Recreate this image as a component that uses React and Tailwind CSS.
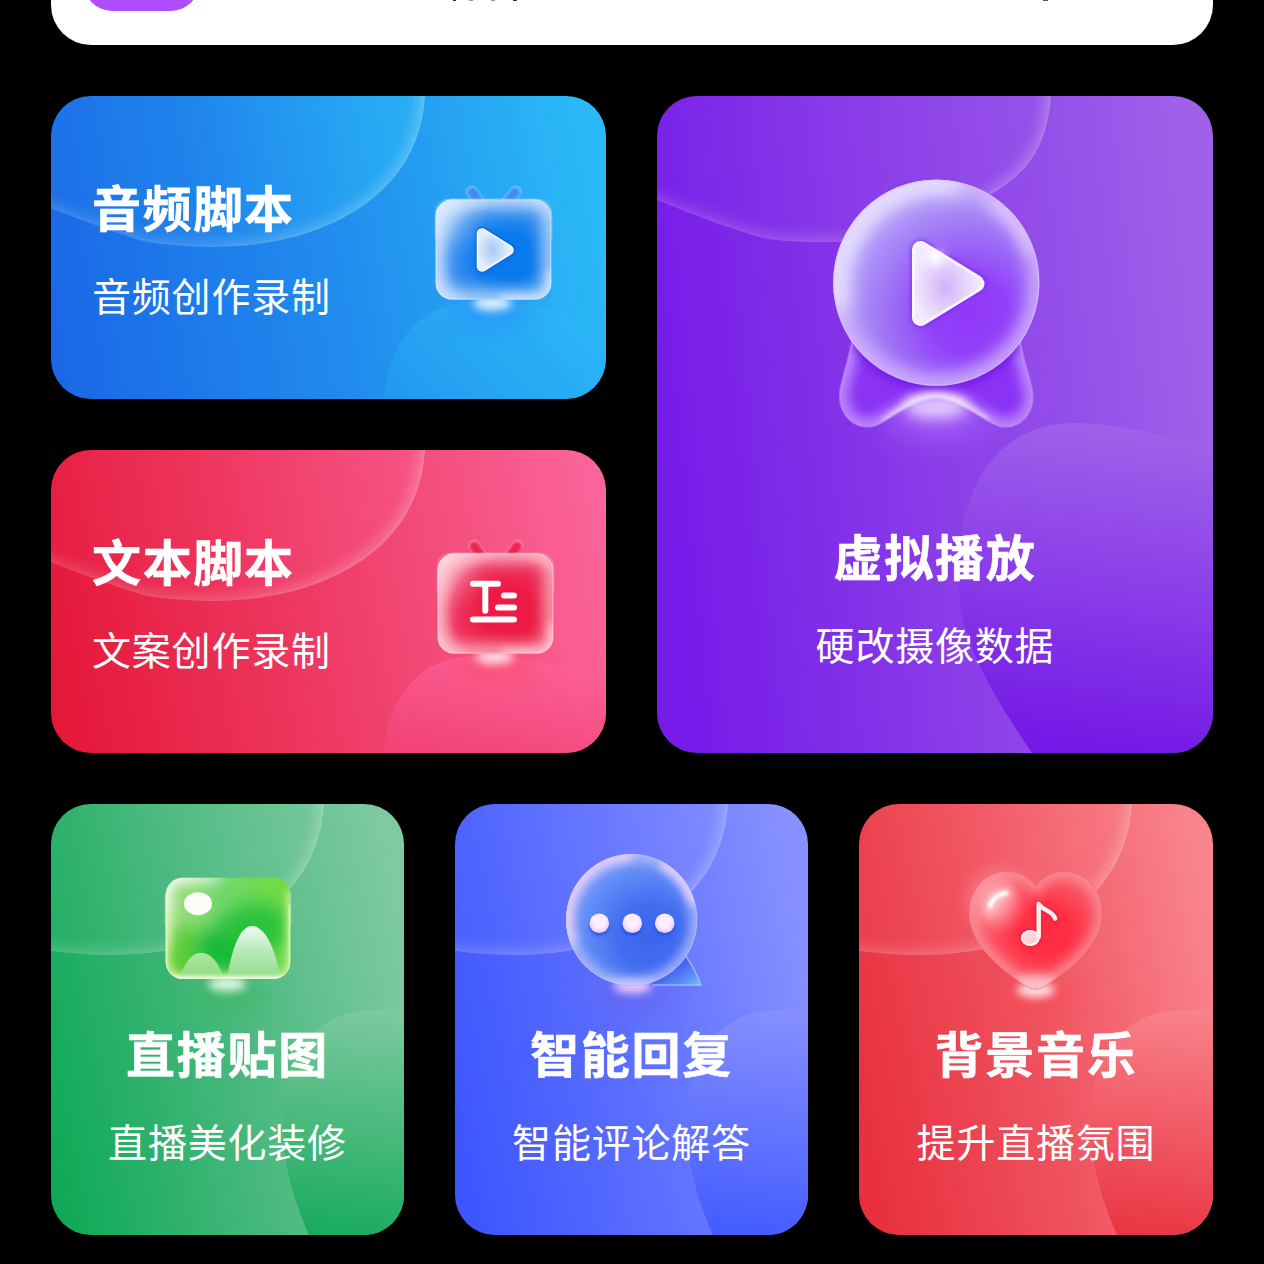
import clsx from 'clsx';

const wideBlob = 'M374 0 C370 62 334 106 270 132 C214 154 150 154 96 146 C62 136 30 124 0 112 L-110 60 V-30 H374 Z';
const wideWave = 'M258 431 C238 385 231 350 232 311 C233 255 262 207 322 206 C365 205 410 215 460 231 V431 Z';
const tallBlob = 'M394 0 C390 50 372 76 336 97 C290 130 235 146 173 146 C150 146 128 146 106 142 C70 132 35 118 0 104 L-80 70 V-30 H394 Z';
const tallWave = 'M375 657 C330 590 301 540 301 481 C301 390 340 328 417 327 C465 327 510 341 556 354 V657 Z';

/* Soft circle in the top left corner and a wave in the bottom right one */
function Backdrop({ id, from, to, tall, shift = 0, fill = 0.4, wave = 1 }) {
  const blobPath = tall ? tallBlob : wideBlob;
  const wavePath = tall ? tallWave : wideWave;
  const end = tall ? 394 : 374;
  return (
    <svg className="absolute inset-0 w-full h-full" aria-hidden="true">
      <defs>
        <linearGradient id={`${id}-blob`} gradientUnits="userSpaceOnUse" x1="0" y1="60" x2={end} y2="0">
          <stop offset="0" stopColor={to} stopOpacity="0.06" />
          <stop offset="0.4" stopColor={to} stopOpacity="0.12" />
          <stop offset="1" stopColor={to} stopOpacity={fill} />
        </linearGradient>
        <linearGradient
          id={`${id}-wave`}
          gradientUnits="userSpaceOnUse"
          x1={tall ? 480 : 360}
          y1={tall ? 340 : 212}
          x2={tall ? 430 : 325}
          y2={tall ? 660 : 455}
        >
          <stop offset="0" stopColor={to} />
          <stop offset="1" stopColor={from} />
        </linearGradient>
        <linearGradient id={`${id}-rim`} gradientUnits="userSpaceOnUse" x1="0" y1="100" x2={end} y2="0">
          <stop offset="0" stopColor="#fff" stopOpacity="0.2" />
          <stop offset="1" stopColor="#fff" stopOpacity="0.34" />
        </linearGradient>
        <clipPath id={`${id}-clip`}>
          <path d={blobPath} />
        </clipPath>
      </defs>
      <g transform={`translate(${shift - (tall ? 0 : 101)} 0)`}>
        <path d={blobPath} fill={`url(#${id}-blob)`} />
        <g clipPath={`url(#${id}-clip)`}>
          <path d={blobPath} fill="none" stroke={`url(#${id}-rim)`} strokeWidth="9" className="blur-[7px]" />
          <path d={blobPath} fill="none" stroke={`url(#${id}-rim)`} strokeWidth="3" className="blur-[1.5px]" opacity="0.4" />
        </g>
      </g>
      <path d={wavePath} fill={`url(#${id}-wave)`} opacity={wave} transform={`translate(${shift} 0)`} />
    </svg>
  );
}

/* Light spot under every icon */
function Spot({ cx, cy, color = '#fff', haze }) {
  return (
    <>
      <ellipse cx={cx} cy={cy + 10} rx="40" ry="20" fill={haze} opacity="0.6" className="blur-[11px]" />
      <ellipse cx={cx} cy={cy} rx="19" ry="7.500" fill={color} className="blur-[4px]" />
    </>
  );
}

function Screen({ id, dark, mid, light, ear, haze, children }) {
  return (
    <svg width="140" height="166" viewBox="423 176 140 166" className="shrink-0">
      <defs>
        <radialGradient id={`${id}-fill`} cx="0.62" cy="0.58" r="0.78">
          <stop offset="0" stopColor={dark} />
          <stop offset="0.3" stopColor={dark} />
          <stop offset="0.65" stopColor={mid} />
          <stop offset="1" stopColor={light} />
        </radialGradient>
        <clipPath id={`${id}-clip`}>
          <rect x="435.7" y="199.5" width="115.6" height="100" rx="16" />
        </clipPath>
      </defs>
      <g stroke={light} strokeOpacity="0.35" strokeWidth="12.5" strokeLinecap="round">
        <path d="M472 191.7 L481 204" />
        <path d="M515.5 191.7 L506 204" />
      </g>
      <g stroke={ear} strokeWidth="9.5" strokeLinecap="round" className="blur-[1.5px]">
        <path d="M472.5 192.5 L481 205" />
        <path d="M515 192.5 L506 205" />
      </g>
      <Spot cx={492.5} cy={303} color={light} haze={haze} />
      <path d="M435.2 239 V214 Q435.2 199 451 199 H536 Q551.8 199 551.8 214 V239" fill="none" stroke={light} strokeOpacity="0.4" />
      <rect x="435.7" y="199.5" width="115.6" height="100" rx="16" fill={`url(#${id}-fill)`} />
      <g clipPath={`url(#${id}-clip)`}>
        <rect x="435.7" y="199.5" width="115.6" height="100" rx="16" fill="none" stroke={light} strokeWidth="16" opacity="0.8" className="blur-[8px]" />
        <ellipse cx="444" cy="214" rx="26" ry="30" fill={light} opacity="0.4" className="blur-[12px]" />
        <path d="M500 299 H536 Q551 299 551 284 V270" fill="none" stroke={light} strokeWidth="6" className="blur-[4px]" />
      </g>
      <rect x="436.2" y="200" width="114.6" height="99" rx="15.5" fill="none" stroke={light} strokeOpacity="0.6" />
      {children}
    </svg>
  );
}

function AudioIcon() {
  return (
    <Screen id="audio" dark="#0a79ec" mid="#3f93f0" light="#e0edff" ear="#4389f2" haze="#2a94fa">
      <defs>
        <radialGradient id="audio-play" cx="0.4" cy="0.5" r="0.6">
          <stop offset="0" stopColor="#a5c9f5" />
          <stop offset="1" stopColor="#e4effd" />
        </radialGradient>
      </defs>
      <path d="M482 233 L509 250 L482 267 Z" fill="#0758d6" stroke="#0758d6" strokeWidth="12" strokeLinejoin="round" opacity="0.8" className="blur-[1.5px]" />
      <path d="M482 233.5 L508.5 250 L482 266.5 Z" fill="#fff" stroke="#fff" strokeWidth="10.5" strokeLinejoin="round" />
      <path d="M482 233.5 L508.5 250 L482 266.5 Z" fill="url(#audio-play)" stroke="url(#audio-play)" strokeWidth="7.5" strokeLinejoin="round" />
    </Screen>
  );
}

function TextIcon() {
  return (
    <Screen id="text" dark="#ed1b44" mid="#ee3560" light="#ffd6e0" ear="#e92450" haze="#fb4d6e">
      <g stroke="#fff" strokeWidth="6" strokeLinecap="round" fill="none">
        <path d="M471 229.7 H496 M483.3 229.7 V256.7" />
        <path d="M502 241.5 H512 M496 253.5 H512 M471 265.5 H512" />
      </g>
    </Screen>
  );
}

function MedalIcon() {
  const ribbon =
    'M856 320 C851 362 840 380 840 397 C841 415 853 426.500 868 426.500 C884 426.500 904 402 936 398 C968 402 989 426.500 1005 426.500 C1020 426.500 1032 415 1032.500 397 C1032 380 1021 362 1016 320 Z';
  return (
    <svg width="280" height="300" viewBox="795 170 280 300">
      <defs>
        <radialGradient id="medal-fill" cx="0.66" cy="0.66" r="0.75">
          <stop offset="0" stopColor="#9138fa" />
          <stop offset="0.25" stopColor="#9240f9" />
          <stop offset="0.55" stopColor="#9f74f6" />
          <stop offset="0.8" stopColor="#b29cf9" />
          <stop offset="1" stopColor="#dcd8fc" />
        </radialGradient>
        <radialGradient id="medal-play" cx="0.45" cy="0.55" r="0.6">
          <stop offset="0" stopColor="#d3b2f9" />
          <stop offset="1" stopColor="#f3eafe" />
        </radialGradient>
        <clipPath id="medal-clip">
          <circle cx="936.300" cy="282.700" r="103" />
        </clipPath>
        <clipPath id="ribbon-clip">
          <path d={ribbon} />
        </clipPath>
      </defs>
      <ellipse cx="936" cy="416" rx="52" ry="24" fill="#a55ff9" opacity="0.8" className="blur-[14px]" />
      <path d={ribbon} fill="#8a33f4" />
      <g clipPath="url(#ribbon-clip)">
        <path d={ribbon} fill="none" stroke="#bd88fb" strokeWidth="16" className="blur-[6px]" />
        <circle cx="936.300" cy="286" r="104" fill="#6c12e2" opacity="0.75" className="blur-[4px]" />
        <path d="M884 424 C904 408 916 400 936 399 C956 400 968 408 988 424" fill="none" stroke="#f3e6ff" strokeWidth="8" className="blur-[3px]" />
        <ellipse cx="936" cy="404" rx="28" ry="7" fill="#f3e6ff" className="blur-[5px]" />
      </g>
      <path d={ribbon} fill="none" stroke="#c795fd" strokeOpacity="0.6" strokeWidth="2.500" />
      <ellipse cx="936" cy="407" rx="32" ry="12" fill="#ead6ff" opacity="0.9" className="blur-[7px]" />
      <circle cx="936.300" cy="282.700" r="103" fill="url(#medal-fill)" />
      <g clipPath="url(#medal-clip)">
        <circle cx="936.300" cy="282.700" r="103" fill="none" stroke="#d6b6fd" strokeWidth="18" className="blur-[9px]" />
        <path d="M840 310 A103 103 0 0 1 960 184" fill="none" stroke="#e6e4fe" strokeWidth="22" className="blur-[10px]" />
        <path d="M992 202 A100 100 0 0 1 1032 252" fill="none" stroke="#e2ccfe" strokeWidth="12" opacity="0.8" className="blur-[7px]" />
      </g>
      <circle cx="936.300" cy="282.700" r="102.500" fill="none" stroke="#dcc6ff" strokeOpacity="0.55" strokeWidth="1.500" />
      <path d="M921 250 L976 283.500 L921 317 Z" fill="#7523e6" stroke="#7523e6" strokeWidth="20" strokeLinejoin="round" opacity="0.7" className="blur-[2px]" />
      <path d="M920.500 249.500 L976 283.500 L920.500 317.500 Z" fill="#fff" stroke="#fbf5ff" strokeWidth="17" strokeLinejoin="round" />
      <path d="M920.500 249.500 L976 283.500 L920.500 317.500 Z" fill="url(#medal-play)" stroke="url(#medal-play)" strokeWidth="11.500" strokeLinejoin="round" />
      <ellipse cx="936" cy="258" rx="9" ry="7" fill="#fff" className="blur-[4px]" />
    </svg>
  );
}

function PictureIcon() {
  return (
    <svg width="160" height="180" viewBox="148 850 160 180">
      <defs>
        <linearGradient id="pic-fill" x1="0" y1="0.3" x2="1" y2="0.1">
          <stop offset="0" stopColor="#a0e07c" />
          <stop offset="0.45" stopColor="#74d770" />
          <stop offset="1" stopColor="#74dc3c" />
        </linearGradient>
        <linearGradient id="pic-hill" x1="0" y1="0" x2="0" y2="1">
          <stop offset="0" stopColor="#f2fbf2" />
          <stop offset="0.5" stopColor="#b4e8b6" />
          <stop offset="1" stopColor="#94dd88" />
        </linearGradient>
        <linearGradient id="pic-hill-small" x1="0" y1="0" x2="0" y2="1">
          <stop offset="0" stopColor="#a9e6a2" />
          <stop offset="1" stopColor="#93dd80" />
        </linearGradient>
        <linearGradient id="pic-shine" gradientUnits="userSpaceOnUse" x1="166" y1="878" x2="215" y2="925">
          <stop offset="0" stopColor="#fff" />
          <stop offset="1" stopColor="#fff" stopOpacity="0" />
        </linearGradient>
        <clipPath id="pic-clip">
          <rect x="165.700" y="877.700" width="124.600" height="101.300" rx="17" />
        </clipPath>
      </defs>
      <Spot cx={227} cy={984} color="#d9f6df" haze="#3fba62" />
      <path d="M165.200 925 V893 M290.800 925 V893" stroke="#e4f8c8" strokeOpacity="0.5" />
      <g clipPath="url(#pic-clip)">
        <rect x="165" y="877" width="126" height="103" fill="url(#pic-fill)" />
        <ellipse cx="182" cy="955" rx="24" ry="30" fill="#62cf3c" className="blur-[9px]" />
        <ellipse cx="226" cy="950" rx="32" ry="24" fill="#17b938" className="blur-[10px]" />
        <ellipse cx="256" cy="928" rx="34" ry="26" fill="#24c038" opacity="0.9" className="blur-[10px]" />
        <path d="M160 955 V872 H222" fill="none" stroke="url(#pic-shine)" strokeWidth="26" className="blur-[6px]" />
        <path d="M165 910 V962 Q168 979 184 979 H274 Q291 978 291 962 V890" fill="none" stroke="#d3f2a2" strokeWidth="8" className="blur-[4px]" />
        <path d="M179 978 C186 961 192 952.700 201 952.700 C211 952.700 219 963 224 978 Z" fill="url(#pic-hill-small)" />
        <path d="M227 978 C232 948 240 926 252 926 C265 926 275 948 281 978 Z" fill="url(#pic-hill)" />
        <path d="M170 978 H287" stroke="#f1fbdc" strokeWidth="4" className="blur-[2px]" />
        <path d="M165.500 890 V962 Q166 979 183 979 H273 Q290.500 979 290.500 962 V905" fill="none" stroke="#f5fde6" strokeOpacity="0.85" strokeWidth="3" className="blur-[0.8px]" />
      </g>
      <ellipse cx="198" cy="903.700" rx="14" ry="11.500" fill="#fbfdf9" />
    </svg>
  );
}

function ChatIcon() {
  return (
    <svg width="160" height="190" viewBox="552 840 160 190">
      <defs>
        <radialGradient id="chat-fill" cx="0.64" cy="0.62" r="0.7">
          <stop offset="0" stopColor="#3c64ee" />
          <stop offset="0.35" stopColor="#426df0" />
          <stop offset="0.7" stopColor="#5f8cf6" />
          <stop offset="1" stopColor="#86a2f8" />
        </radialGradient>
        <linearGradient id="chat-tail" x1="0" y1="0" x2="1" y2="1">
          <stop offset="0.4" stopColor="#3f58ee" />
          <stop offset="0.8" stopColor="#5c96f8" />
          <stop offset="1" stopColor="#8cc0fc" />
        </linearGradient>
        <radialGradient id="chat-dot" cx="0.5" cy="0.4" r="0.6">
          <stop offset="0.5" stopColor="#fdf0fe" />
          <stop offset="1" stopColor="#e2cbfa" />
        </radialGradient>
        <clipPath id="chat-clip">
          <circle cx="631.700" cy="919.800" r="65.700" />
        </clipPath>
      </defs>
      <Spot cx={632.7} cy={986} color="#efc4fb" haze="#6766ec" />
      <path d="M685 954 C690 963 697 974 701 985.500 L650 985.500 Z" fill="url(#chat-tail)" />
      <path d="M686 956 C691 964 697 974 701 985 L652 985" fill="none" stroke="#a3c0fd" strokeWidth="1.500" strokeOpacity="0.8" />
      <circle cx="631.700" cy="919.800" r="65.700" fill="url(#chat-fill)" />
      <g clipPath="url(#chat-clip)">
        <circle cx="631.700" cy="919.800" r="65.700" fill="none" stroke="#b3b9fb" strokeWidth="12" className="blur-[6px]" />
        <path d="M570 945 A65.700 65.700 0 0 1 632 854" fill="none" stroke="#f0d3fb" strokeWidth="13" className="blur-[6px]" />
        <path d="M662 862 A65.700 65.700 0 0 1 696 904" fill="none" stroke="#e6cffb" strokeWidth="12" className="blur-[4px]" />
        <ellipse cx="630" cy="985" rx="34" ry="5" fill="#c4d0fe" className="blur-[4px]" />
      </g>
      <circle cx="631.700" cy="919.800" r="65.200" fill="none" stroke="#d8cdfc" strokeOpacity="0.4" />
      {[599.3, 632.3, 664.7].map((cx) => (
        <g key={cx}>
          <circle cx={cx} cy="926" r="10" fill="#2a47dc" opacity="0.75" className="blur-[1.5px]" />
          <circle cx={cx} cy="923.300" r="9.800" fill="url(#chat-dot)" />
        </g>
      ))}
    </svg>
  );
}

function HeartIcon() {
  const heart =
    'M1035.700 886 C1029 877 1019 871.500 1007 871.500 C985 871.500 969 890 969 913 C969 942 995 965 1020 982 C1026 986 1031 989.500 1035.700 989.500 C1040 989.500 1046 986 1051 982 C1077 965 1102.500 942 1102.500 913 C1102.500 890 1086 871.500 1064 871.500 C1052 871.500 1042 877 1035.700 886 Z';
  return (
    <svg width="170" height="190" viewBox="951 840 170 190">
      <defs>
        <radialGradient id="heart-fill" cx="0.56" cy="0.5" r="0.58">
          <stop offset="0" stopColor="#ff2b40" />
          <stop offset="0.35" stopColor="#fe3045" />
          <stop offset="1" stopColor="#f9707b" />
        </radialGradient>
        <clipPath id="heart-clip">
          <path d={heart} />
        </clipPath>
      </defs>
      <ellipse cx="1000" cy="900" rx="33" ry="31" fill="#ffb0b8" opacity="0.35" className="blur-[8px]" />
      <Spot cx={1035.7} cy={990} color="#ffe0e2" haze="#f84d59" />
      <path d={heart} fill="url(#heart-fill)" />
      <g clipPath="url(#heart-clip)">
        <path d={heart} fill="none" stroke="#f98e97" strokeWidth="12" className="blur-[6px]" />
        <ellipse cx="996" cy="901" rx="20" ry="23" fill="#ffaab2" opacity="0.9" className="blur-[9px]" />
        <ellipse cx="1035" cy="985" rx="22" ry="10" fill="#ffc6cb" opacity="0.9" className="blur-[5px]" />
      </g>
      <path d={heart} fill="none" stroke="#e45661" strokeOpacity="0.3" />
      <path d="M989 912 C990 901 997 895 1008 893" fill="none" stroke="#ffe9ea" strokeWidth="9" strokeLinecap="round" opacity="0.6" className="blur-[4px]" />
      <path d="M990 906 C992 899 998 894 1006 893" fill="none" stroke="#fff" strokeWidth="4.500" strokeLinecap="round" className="blur-[1.5px]" />
      <g stroke="#e5152f" strokeOpacity="0.55" fill="none" strokeLinecap="round" className="blur-[1.5px]">
        <path d="M1038.700 937 V904.500 C1041 910 1054 912 1055.500 920" strokeWidth="7" />
        <ellipse cx="1030.300" cy="938" rx="9" ry="7.500" strokeWidth="4" />
      </g>
      <path d="M1038.700 937 V904 C1042 910 1053 911 1055.200 918.500" fill="none" stroke="#fff1f2" strokeWidth="4.500" strokeLinecap="round" strokeLinejoin="round" />
      <ellipse cx="1030.300" cy="938" rx="8.500" ry="7" fill="#ffd3d8" stroke="#fff4f5" strokeWidth="2" />
    </svg>
  );
}

function Caption({ title, text, center }) {
  return (
    <div className={clsx('relative text-white whitespace-nowrap', center && 'text-center')}>
      <h2 className="text-[49px] leading-[60px] font-bold tracking-[1.7px] [-webkit-text-stroke:0.6px_white]">{title}</h2>
      <p className="mt-[28px] text-[39px] leading-[60px] font-normal tracking-[0.8px]">{text}</p>
    </div>
  );
}

function WideCard({ id, from, to, fill, wave, className, title, text, icon }) {
  return (
    <section className={clsx('relative h-[303px] rounded-[40px] overflow-hidden flex justify-between pl-[41px]', className)}>
      <Backdrop id={id} from={from} to={to} shift={101} fill={fill} wave={wave} />
      <div className="pt-[80px]">
        <Caption title={title} text={text} />
      </div>
      <div className="relative pt-[80px]">{icon}</div>
    </section>
  );
}

function SmallCard({ id, from, to, className, title, text, icon }) {
  return (
    <section className={clsx('relative h-[431px] rounded-[40px] overflow-hidden flex flex-col items-center', className)}>
      <Backdrop id={id} from={from} to={to} />
      <div className="relative h-[218px]">{icon}</div>
      <Caption title={title} text={text} center />
    </section>
  );
}

export default function App() {
  return (
    <main className="w-[1264px] h-[1264px] overflow-hidden bg-black px-[51px] font-['Noto_Sans_CJK_SC',sans-serif]">
      {/* Lower edge of the list panel */}
      <div className="h-[45px] rounded-b-[40px] bg-white flex items-start">
        <div className="ml-[33px] w-[115px] h-[11px] overflow-hidden flex items-end shrink-0">
          <div className="w-[115px] h-[100px] rounded-[28px] bg-[#b04cff] shrink-0" />
        </div>
        <div className="ml-[254px] h-px flex">
          <i className="w-[3px] bg-[#333]" />
          <i className="ml-[13px] w-[4px] bg-[#999]" />
          <i className="ml-[18px] w-[4px] bg-[#999]" />
          <i className="ml-[18px] w-[4px] bg-[#333]" />
          <i className="ml-[526px] w-[5px] bg-[#555]" />
        </div>
      </div>

      <div className="mt-[51px] grid grid-cols-[555px_556px] gap-[51px]">
        <div className="flex flex-col gap-[51px]">
          <WideCard
            id="blue"
            from="#1b86ec"
            to="#2bb8f7"
            fill={0.65}
            wave={0.45}
            className="bg-linear-[80deg,#1a68e6_2%,#218dee_52%,#2bbaf7_96%] pr-[43px]"
            title="音频脚本"
            text="音频创作录制"
            icon={<AudioIcon />}
          />
          <WideCard
            id="red"
            from="#e61a50"
            to="#fb5f95"
            fill={0.35}
            wave={0.85}
            className="bg-linear-[80deg,#e51839_3%,#ee3a63_47%,#fb659c_98%] pr-[41px]"
            title="文本脚本"
            text="文案创作录制"
            icon={<TextIcon />}
          />
        </div>
        <section className="relative h-[657px] rounded-[40px] overflow-hidden flex flex-col items-center bg-linear-[84deg,#761be9_6%,#8b3fe8_52%,#9f60ea_94%]">
          <Backdrop id="purple" from="#7317e6" to="#9f60ea" fill={0.2} tall />
          <div className="relative pt-[74px] h-[429px]">
            <MedalIcon />
          </div>
          <Caption title="虚拟播放" text="硬改摄像数据" center />
        </section>
      </div>

      <div className="mt-[51px] grid grid-cols-[353px_353px_354px] gap-[51px]">
        <SmallCard
          id="green"
          from="#12a959"
          to="#7cc99e"
          className="bg-linear-[78deg,#0fa957_4%,#48b87e_50%,#7fcaa0_94%]"
          title="直播贴图"
          text="直播美化装修"
          icon={
            <div className="pt-[46px]">
              <PictureIcon />
            </div>
          }
        />
        <SmallCard
          id="indigo"
          from="#3f58fe"
          to="#858fff"
          className="bg-linear-[78deg,#3d55fe_4%,#5d70ff_50%,#8791ff_94%]"
          title="智能回复"
          text="智能评论解答"
          icon={
            <div className="pt-[36px]">
              <ChatIcon />
            </div>
          }
        />
        <SmallCard
          id="coral"
          from="#e8303e"
          to="#f98189"
          className="bg-linear-[78deg,#e82f3d_4%,#ef525f_50%,#fa848c_94%]"
          title="背景音乐"
          text="提升直播氛围"
          icon={
            <div className="pt-[36px]">
              <HeartIcon />
            </div>
          }
        />
      </div>
    </main>
  );
}
